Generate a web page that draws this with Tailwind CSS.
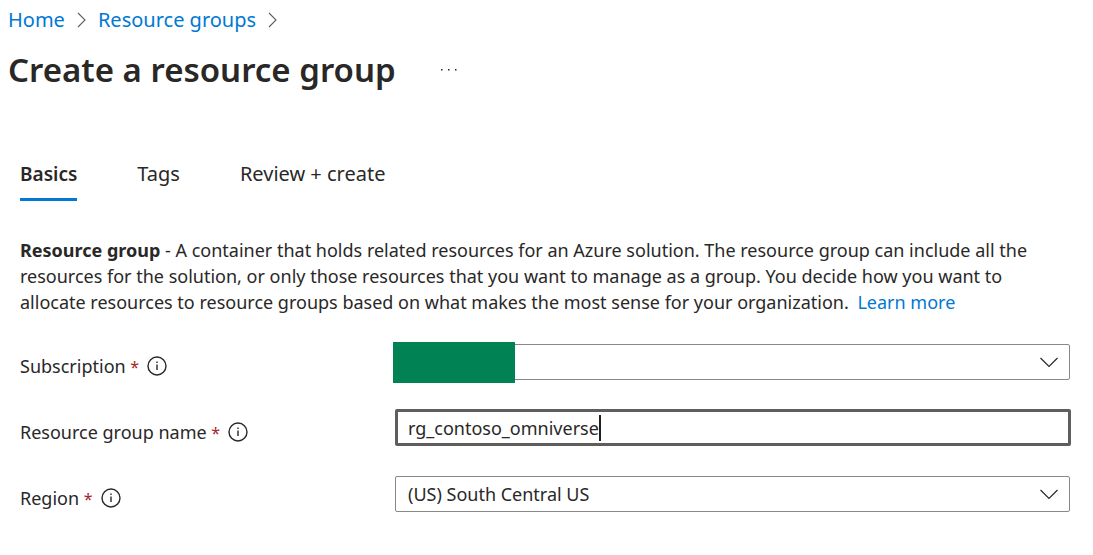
<!DOCTYPE html>
<html lang="en">
<head>
<meta charset="utf-8">
<meta name="viewport" content="width=device-width, initial-scale=1">
<title>Create a resource group</title>
<script src="https://cdn.jsdelivr.net/npm/@tailwindcss/browser@4"></script>
</head>
<body class="bg-white font-['Noto_Sans','Open_Sans',sans-serif] text-[18px] leading-[26px] text-[#292827]">
<header class="px-2 pt-[7px]">
  <nav aria-label="Breadcrumb" class="flex items-center gap-3 text-[20px] text-[#0078d4]">
    <a href="#">Home</a>
    <svg class="h-4 w-[9px] text-[#605e5c]" viewBox="0 0 9 16" fill="none" stroke="currentColor" stroke-width="1.1" aria-hidden="true"><path d="M1 1l7 7-7 7"/></svg>
    <a href="#">Resource groups</a>
    <svg class="h-4 w-[9px] text-[#605e5c]" viewBox="0 0 9 16" fill="none" stroke="currentColor" stroke-width="1.1" aria-hidden="true"><path d="M1 1l7 7-7 7"/></svg>
  </nav>
  <div class="mt-3 flex items-center gap-11">
    <h1 class="text-[33px] leading-[50px] font-semibold">Create a resource group</h1>
    <button type="button" aria-label="More actions">
      <svg class="h-4 w-[17px]" viewBox="0 0 17 16" fill="currentColor" aria-hidden="true"><path d="M1 7h1.500v1.500H1zM8 7h1.500v1.500H8zM15 7h1.500v1.500H15z"/></svg>
    </button>
  </div>
</header>
<main class="px-5 pt-[66px]">
  <div role="tablist" class="flex items-start gap-[60px] text-[20px]">
    <button type="button" role="tab" aria-selected="true" class="border-b-3 border-[#0078d4] pb-[11px] text-[19px] font-semibold">Basics</button>
    <button type="button" role="tab" aria-selected="false">Tags</button>
    <button type="button" role="tab" aria-selected="false">Review + create</button>
  </div>
  <p class="mt-9 max-w-[1040px]"><b>Resource group</b> - A container that holds related resources for an Azure solution. The resource group can include all the resources for the solution, or only those resources that you want to manage as a group. You decide how you want to allocate resources to resource groups based on what makes the most sense for your organization. <a href="#" class="ml-1 text-[#0078d4]">Learn more</a></p>
  <form class="mt-[29px] mr-[3px] flex flex-col gap-[30px]">
    <div class="flex">
      <div class="flex w-[375px] shrink-0 items-center gap-2 pt-2">
        <label for="subscription">Subscription <span class="text-[16px] text-[#a4262c]">*</span></label>
        <svg class="size-5" viewBox="0 0 20 20" fill="none" stroke="currentColor" stroke-width="1.4" aria-hidden="true"><circle cx="10" cy="10" r="9"/><path d="M10 8.500V14M10 5.500v1.600"/></svg>
      </div>
      <div class="relative flex-1">
        <select id="subscription" class="h-9 w-full appearance-none rounded-xs border border-[#8a8886] bg-white px-3"><option></option></select>
        <span class="absolute -top-[2px] -left-[2px] h-[41px] w-[122px] bg-[#008255]"></span>
        <svg class="pointer-events-none absolute top-[13px] right-3 h-[11px] w-[18px]" viewBox="0 0 18 11" fill="none" stroke="currentColor" stroke-width="1.2" aria-hidden="true"><path d="M0.500 1L9 9.500 17.500 1"/></svg>
      </div>
    </div>
    <div class="flex">
      <div class="flex w-[375px] shrink-0 items-center gap-2 pt-2">
        <label for="group">Resource group name <span class="text-[16px] text-[#a4262c]">*</span></label>
        <svg class="size-5" viewBox="0 0 20 20" fill="none" stroke="currentColor" stroke-width="1.4" aria-hidden="true"><circle cx="10" cy="10" r="9"/><path d="M10 8.500V14M10 5.500v1.600"/></svg>
      </div>
      <div class="-mt-px -mr-px flex h-[37px] flex-1 items-center rounded-xs border-3 border-[#605e5c] pl-[10px]">
        <input id="group" type="text" value="rg_contoso_omniverse" class="field-sizing-content bg-transparent outline-none">
        <span class="h-[26px] w-[2px] bg-[#201f1e]"></span>
      </div>
    </div>
    <div class="flex">
      <div class="flex w-[375px] shrink-0 items-center gap-2 pt-2">
        <label for="region">Region <span class="text-[16px] text-[#a4262c]">*</span></label>
        <svg class="size-5" viewBox="0 0 20 20" fill="none" stroke="currentColor" stroke-width="1.4" aria-hidden="true"><circle cx="10" cy="10" r="9"/><path d="M10 8.500V14M10 5.500v1.600"/></svg>
      </div>
      <div class="relative flex-1">
        <select id="region" class="h-9 w-full appearance-none rounded-xs border border-[#8a8886] bg-white px-3"><option>(US) South Central US</option></select>
        <svg class="pointer-events-none absolute top-[13px] right-3 h-[11px] w-[18px]" viewBox="0 0 18 11" fill="none" stroke="currentColor" stroke-width="1.2" aria-hidden="true"><path d="M0.500 1L9 9.500 17.500 1"/></svg>
      </div>
    </div>
  </form>
</main>
</body>
</html>
